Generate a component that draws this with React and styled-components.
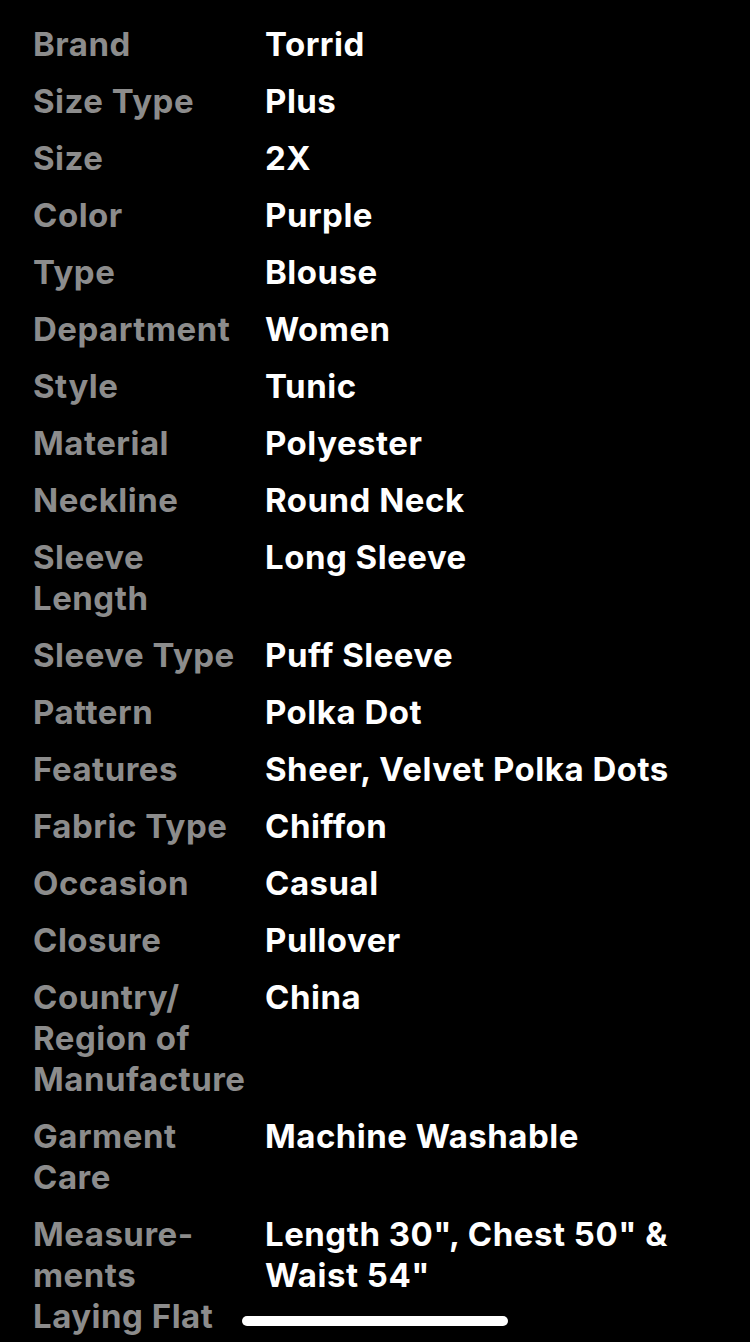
import React from 'react';
import styled, { createGlobalStyle } from 'styled-components';

const GlobalStyle = createGlobalStyle`
  html, body {
    margin: 0;
    padding: 0;
    background: #000;
  }
  body {
    font-family: Inter, "Noto Sans", "Liberation Sans", sans-serif;
    -webkit-font-smoothing: antialiased;
  }
`;

const Screen = styled.div`
  position: relative;
  width: 750px;
  height: 1342px;
  overflow: hidden;
  background: #000;
`;

const SpecList = styled.dl`
  display: grid;
  grid-template-columns: 216px 1fr;
  column-gap: 16px;
  row-gap: 16px;
  margin: 0;
  padding: 24px 30px 0 33px;
`;

const Label = styled.dt`
  margin: 0;
  color: #8c8c8c;
  font-size: 33px;
  font-weight: 700;
  letter-spacing: 0.5px;
  line-height: 41px;
  hyphens: manual;
`;

const Value = styled.dd`
  margin: 0;
  color: #fff;
  font-size: 33px;
  font-weight: 700;
  letter-spacing: 0.5px;
  line-height: 41px;
`;

const HomeBar = styled.div`
  position: absolute;
  left: 242px;
  top: 1316px;
  width: 266px;
  height: 10px;
  border-radius: 5px;
  background: #fff;
`;

const specs = [
  ['Brand', 'Torrid'],
  ['Size Type', 'Plus'],
  ['Size', '2X'],
  ['Color', 'Purple'],
  ['Type', 'Blouse'],
  ['Department', 'Women'],
  ['Style', 'Tunic'],
  ['Material', 'Polyester'],
  ['Neckline', 'Round Neck'],
  ['Sleeve Length', 'Long Sleeve'],
  ['Sleeve Type', 'Puff Sleeve'],
  ['Pattern', 'Polka Dot'],
  ['Features', 'Sheer, Velvet Polka Dots'],
  ['Fabric Type', 'Chiffon'],
  ['Occasion', 'Casual'],
  ['Closure', 'Pullover'],
  ['Country/ Region of Manufacture', 'China'],
  ['Garment Care', 'Machine Washable'],
  ['Measure\u00ADments Laying Flat', 'Length 30", Chest 50" & Waist 54"'],
];

const App = () => (
  <Screen>
    <GlobalStyle />
    <SpecList>
      {specs.map(([label, value]) => (
        <React.Fragment key={label}>
          <Label>{label}</Label>
          <Value>{value}</Value>
        </React.Fragment>
      ))}
    </SpecList>
    <HomeBar />
  </Screen>
);

export default App;
